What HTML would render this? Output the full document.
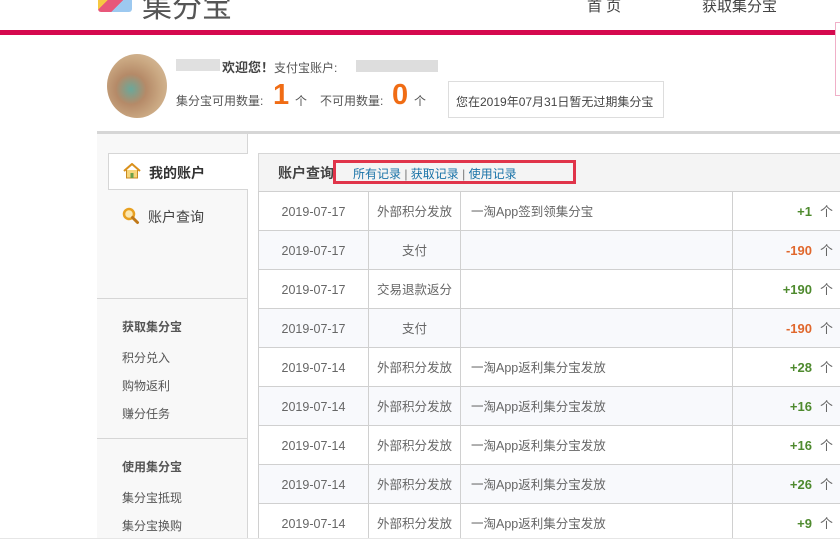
<!DOCTYPE html>
<html><head><meta charset="utf-8"><style>
*{margin:0;padding:0;box-sizing:border-box}
body{width:840px;height:560px;overflow:hidden;background:#fff;font-family:"Liberation Sans","Noto Sans CJK SC",sans-serif;color:#555;position:relative;font-size:12px}
.a{position:absolute;white-space:nowrap}
table{border-collapse:collapse;position:absolute;left:258px;top:191px;width:600px}
td{height:39px;border:1px solid #d0d0d0;font-size:12.5px;color:#666;text-align:center;line-height:16px;vertical-align:middle;padding-top:1px}
td>span.t{display:inline-block;height:16px;line-height:16px}
tr:nth-child(even) td{background:#f8f9fc}
td.d{text-align:left;padding-left:10px}
td.n{text-align:right;padding-right:24px;font-weight:bold;font-size:13px}
.g{color:#4e8a2e}.r{color:#e0672c}
.n span{font-weight:normal;color:#666;margin-left:8px}
</style></head><body>
<div class="a" style="left:98px;top:-6px;width:34px;height:18px;border-radius:3px;background:linear-gradient(135deg,#f6c842 30%,#e8577a 30%,#e8577a 60%,#9dc9f0 60%)"></div>
<div class="a" style="left:142px;top:-18px;font-size:30px;color:#555">集分宝</div>
<div class="a" style="left:587px;top:-5px;font-size:15px;color:#444">首 页</div>
<div class="a" style="left:702px;top:-5px;font-size:15px;color:#444">获取集分宝</div>
<div class="a" style="left:0;top:30px;width:840px;height:5px;background:#d5094e"></div>
<div class="a" style="left:835px;top:22px;width:6px;height:74px;border:1px solid #f0b0c8;background:#fff"></div>
<div class="a" style="left:107px;top:54px;width:60px;height:64px;border-radius:50%;background:radial-gradient(circle at 40% 55%,#6aa89a 0,#b58a68 30%,#caa882 60%,#ddc7a8 100%)"></div>
<div class="a" style="left:176px;top:59px;width:44px;height:12px;background:#ccc;opacity:.6"></div>
<div class="a" style="left:222px;top:57px;font-size:13px;font-weight:bold;color:#444">欢迎您！<span style="font-weight:normal;font-size:12px;color:#555">支付宝账户:</span></div>
<div class="a" style="left:356px;top:60px;width:82px;height:12px;background:#ddd"></div>
<div class="a" style="left:176px;top:92px;font-size:12px;color:#555">集分宝可用数量:</div>
<div class="a" style="left:273px;top:79px;font-size:29px;font-weight:bold;color:#f06c14">1</div>
<div class="a" style="left:295px;top:92px;font-size:12px">个</div>
<div class="a" style="left:320px;top:92px;font-size:12px">不可用数量:</div>
<div class="a" style="left:392px;top:79px;font-size:29px;font-weight:bold;color:#f06c14">0</div>
<div class="a" style="left:414px;top:92px;font-size:12px">个</div>
<div class="a" style="left:448px;top:81px;width:216px;height:37px;border:1px solid #ddd;padding:11px 0 0 7px;font-size:12px;color:#444">您在2019年07月31日暂无过期集分宝</div>
<div class="a" style="left:97px;top:131px;width:743px;height:3px;background:#d6d6d6"></div>
<div class="a" style="left:97px;top:134px;width:151px;height:404px;background:#f8f8f8;border-right:1px solid #d6d6d6"></div>
<div class="a" style="left:108px;top:153px;width:140px;height:37px;background:#fff;border:1px solid #d6d6d6;border-right:none"></div>
<svg class="a" style="left:123px;top:163px" width="18" height="16" viewBox="0 0 18 16"><path d="M1 8L9 1l8 7" fill="none" stroke="#d9901c" stroke-width="2"/><path d="M3.5 7v8h11V7" fill="#f6d57a" stroke="#c98a20"/><rect x="7.5" y="10" width="3" height="5" fill="#6aa04a"/></svg>
<div class="a" style="left:149px;top:163px;font-size:14px;font-weight:bold;color:#333">我的账户</div>
<svg class="a" style="left:122px;top:207px" width="18" height="18" viewBox="0 0 18 18"><circle cx="7" cy="7" r="5" fill="#fbe7b0" stroke="#e8a020" stroke-width="2.5"/><path d="M10.5 10.5l5 5" stroke="#c07818" stroke-width="3" stroke-linecap="round"/></svg>
<div class="a" style="left:148px;top:207px;font-size:14px;color:#444">账户查询</div>
<div class="a" style="left:97px;top:298px;width:151px;height:1px;background:#d6d6d6"></div>
<div class="a" style="left:122px;top:318px;font-size:12px;font-weight:bold;color:#555">获取集分宝</div>
<div class="a" style="left:122px;top:349px">积分兑入</div>
<div class="a" style="left:122px;top:377px">购物返利</div>
<div class="a" style="left:122px;top:405px">赚分任务</div>
<div class="a" style="left:97px;top:438px;width:151px;height:1px;background:#d6d6d6"></div>
<div class="a" style="left:122px;top:458px;font-size:12px;font-weight:bold;color:#555">使用集分宝</div>
<div class="a" style="left:122px;top:489px">集分宝抵现</div>
<div class="a" style="left:122px;top:517px">集分宝换购</div>
<div class="a" style="left:258px;top:153px;width:600px;height:39px;background:#f4f4f4;border:1px solid #d6d6d6"></div>
<div class="a" style="left:278px;top:163px;font-size:14px;font-weight:bold;color:#444">账户查询</div>
<div class="a" style="left:333px;top:160px;width:243px;height:24px;border:3px solid #e0344a"></div>
<div class="a" style="left:353px;top:165px;font-size:12px;color:#1a73a8">所有记录 <span style="color:#777">|</span> 获取记录 <span style="color:#777">|</span> 使用记录</div>
<table>
<colgroup><col style="width:110px"><col style="width:92px"><col style="width:272px"><col></colgroup>
<tr><td>2019-07-17</td><td>外部积分发放</td><td class="d">一淘App签到领集分宝</td><td class="n g">+1<span>个</span></td></tr>
<tr><td>2019-07-17</td><td>支付</td><td class="d"></td><td class="n r">-190<span>个</span></td></tr>
<tr><td>2019-07-17</td><td>交易退款返分</td><td class="d"></td><td class="n g">+190<span>个</span></td></tr>
<tr><td>2019-07-17</td><td>支付</td><td class="d"></td><td class="n r">-190<span>个</span></td></tr>
<tr><td>2019-07-14</td><td>外部积分发放</td><td class="d">一淘App返利集分宝发放</td><td class="n g">+28<span>个</span></td></tr>
<tr><td>2019-07-14</td><td>外部积分发放</td><td class="d">一淘App返利集分宝发放</td><td class="n g">+16<span>个</span></td></tr>
<tr><td>2019-07-14</td><td>外部积分发放</td><td class="d">一淘App返利集分宝发放</td><td class="n g">+16<span>个</span></td></tr>
<tr><td>2019-07-14</td><td>外部积分发放</td><td class="d">一淘App返利集分宝发放</td><td class="n g">+26<span>个</span></td></tr>
<tr><td>2019-07-14</td><td>外部积分发放</td><td class="d">一淘App返利集分宝发放</td><td class="n g">+9<span>个</span></td></tr>
</table>
<div class="a" style="left:0;top:538px;width:840px;height:22px;background:#fff;border-top:1px solid #e6e6e6"></div>
</body></html>
